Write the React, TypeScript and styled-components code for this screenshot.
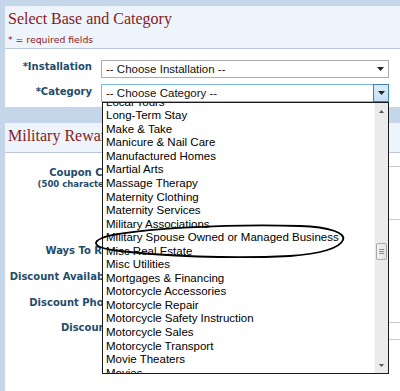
import styled, { createGlobalStyle } from "styled-components";

const GlobalStyle = createGlobalStyle`
  html, body {
    margin: 0;
    padding: 0;
  }
  body {
    background: #c5d6ea;
    width: 400px;
    height: 391px;
    overflow: hidden;
  }
`;

const Page = styled.div`
  position: relative;
  box-sizing: border-box;
  height: 391px;
  padding: 6px 0 0 5px;
  overflow: hidden;
`;

const Panel = styled.section<{ $fill?: boolean }>`
  width: 420px;
  background: #fff;
  & + & {
    margin-top: 16px;
  }
  ${p => p.$fill && "height: 300px;"}
`;

const PanelHeader = styled.div<{ $bottom: number }>`
  background: #eef4fc;
  border-bottom: 1px solid #b9c8dc;
  padding: 3px 0 ${p => p.$bottom}px 3px;
`;

const Title = styled.h2`
  margin: 0;
  font: normal 16px/20px "Liberation Serif", "DejaVu Serif", serif;
  color: #861a1a;
`;

const Required = styled.div`
  margin-top: 5px;
  font: 9.3px/12px "DejaVu Sans", Verdana, sans-serif;
  color: #861a1a;
`;

const PanelBody = styled.div<{ $label: number; $gap: number; $rowGap: number; $top: number }>`
  display: grid;
  grid-template-columns: ${p => p.$label}px 1fr;
  column-gap: ${p => p.$gap}px;
  row-gap: ${p => p.$rowGap}px;
  align-items: start;
  padding: ${p => p.$top}px 0 5px;
`;

const Label = styled.div<{ $pad?: number }>`
  text-align: right;
  white-space: nowrap;
  padding-top: ${p => p.$pad ?? 1}px;
  font: bold 10px/11px "DejaVu Sans", Verdana, sans-serif;
  color: #1f4d6b;
`;

const Hint = styled.span`
  display: block;
  margin-top: 1px;
  font-size: 8.5px;
  line-height: 10px;
`;

const SelectBox = styled.div<{ $focused?: boolean }>`
  position: relative;
  box-sizing: border-box;
  width: 288px;
  height: 18px;
  display: flex;
  align-items: center;
  background: #fff;
  border: 1px solid ${p => (p.$focused ? "#7eb4ea" : "#abadb3")};
  font: 11.5px/16px "Liberation Sans", Arial, sans-serif;
  color: #111;
`;

const SelectText = styled.span`
  flex: 1;
  padding-left: 4px;
  white-space: nowrap;
`;

const SelectButton = styled.span<{ $focused?: boolean }>`
  box-sizing: border-box;
  width: 15px;
  align-self: stretch;
  display: flex;
  align-items: center;
  justify-content: center;
  ${p =>
    p.$focused &&
    `
    background: linear-gradient(#dcedfa, #c3e0f6);
    border: 1px solid #3c7fb1;
    margin: -1px -1px -1px 0;
    width: 16px;
  `}
`;

const DropList = styled.div`
  position: absolute;
  top: calc(100% + 1px);
  left: 0;
  right: -1px;
  height: 272px;
  box-sizing: border-box;
  display: flex;
  background: #fff;
  border: 1px solid #1a1a1a;
  overflow: hidden;
  z-index: 2;
`;

const Options = styled.div`
  flex: 1;
  overflow: hidden;
`;

const OptionStack = styled.div<{ $scroll: number }>`
  margin-top: ${p => -p.$scroll}px;
`;

const Option = styled.div`
  padding-left: 3px;
  white-space: nowrap;
  font: 11.5px/13.55px "Liberation Sans", Arial, sans-serif;
  color: #000;
`;

const ScrollBar = styled.div`
  width: 13px;
  display: flex;
  flex-direction: column;
  align-items: center;
  background: #ebebeb;
  border-left: 1px solid #f6f6f6;
`;

const ArrowCell = styled.div`
  height: 16px;
  display: flex;
  align-items: center;
  justify-content: center;
`;

const Track = styled.div`
  flex: 1;
  width: 100%;
  display: flex;
  justify-content: center;
`;

const Thumb = styled.div<{ $offset: number }>`
  box-sizing: border-box;
  margin-top: ${p => p.$offset}px;
  width: 11px;
  height: 17px;
  border: 1px solid #a9a9a9;
  border-radius: 2px;
  background: linear-gradient(90deg, #f4f4f4, #e2e2e2);
  display: flex;
  flex-direction: column;
  align-items: center;
  justify-content: center;
  gap: 1px;
`;

const Grip = styled.span`
  width: 5px;
  height: 1px;
  background: #8c8c8c;
`;

const Field = styled.div<{ $w: number; $h?: number; $after?: number }>`
  box-sizing: border-box;
  width: ${p => p.$w}px;
  height: ${p => p.$h ?? 18}px;
  margin-bottom: ${p => p.$after ?? 0}px;
  background: #fff;
  border: 1px solid #c9c9c9;
`;

const Annotation = styled.svg`
  position: absolute;
  top: 0;
  left: 0;
  z-index: 3;
  pointer-events: none;
`;

const Caret = ({ up }: { up?: boolean }) => (
  <svg width="7" height="4" viewBox="0 0 7 4">
    <path d={up ? "M0 4 L3.5 0 L7 4 Z" : "M0 0 L7 0 L3.5 4 Z"} fill="#222" />
  </svg>
);

const SmallCaret = ({ up }: { up?: boolean }) => (
  <svg width="5" height="3" viewBox="0 0 5 3">
    <path d={up ? "M0 3 L2.5 0 L5 3 Z" : "M0 0 L5 0 L2.5 3 Z"} fill="#555" />
  </svg>
);

const categories = [
  "Local Tours",
  "Long-Term Stay",
  "Make & Take",
  "Manicure & Nail Care",
  "Manufactured Homes",
  "Martial Arts",
  "Massage Therapy",
  "Maternity Clothing",
  "Maternity Services",
  "Military Associations",
  "Military Spouse Owned or Managed Business",
  "Misc Real Estate",
  "Misc Utilities",
  "Mortgages & Financing",
  "Motorcycle Accessories",
  "Motorcycle Repair",
  "Motorcycle Safety Instruction",
  "Motorcycle Sales",
  "Motorcycle Transport",
  "Movie Theaters",
  "Movies",
  "Moving Services",
];

export default function App() {
  return (
    <>
      <GlobalStyle />
      <Page>
        <Panel>
          <PanelHeader $bottom={2}>
            <Title>Select Base and Category</Title>
            <Required>* = required fields</Required>
          </PanelHeader>
          <PanelBody $label={87} $gap={9} $rowGap={6} $top={11}>
            <Label>*Installation</Label>
            <SelectBox>
              <SelectText>-- Choose Installation --</SelectText>
              <SelectButton>
                <Caret />
              </SelectButton>
            </SelectBox>
            <Label $pad={2}>*Category</Label>
            <SelectBox $focused>
              <SelectText>-- Choose Category --</SelectText>
              <SelectButton $focused>
                <Caret />
              </SelectButton>
              <DropList>
                <Options>
                  <OptionStack $scroll={7.3}>
                    {categories.map(c => (
                      <Option key={c}>{c}</Option>
                    ))}
                  </OptionStack>
                </Options>
                <ScrollBar>
                  <ArrowCell>
                    <SmallCaret up />
                  </ArrowCell>
                  <Track>
                    <Thumb $offset={124}>
                      <Grip />
                      <Grip />
                      <Grip />
                    </Thumb>
                  </Track>
                  <ArrowCell>
                    <SmallCaret />
                  </ArrowCell>
                </ScrollBar>
              </DropList>
            </SelectBox>
          </PanelBody>
        </Panel>

        <Panel $fill>
          <PanelHeader $bottom={6}>
            <Title>Military Rewards Discount</Title>
          </PanelHeader>
          <PanelBody $label={135} $gap={10} $rowGap={8} $top={13}>
            <Label>
              Coupon Content
              <Hint>(500 characters max)</Hint>
            </Label>
            <Field $w={300} $h={54} $after={16} />
            <Label>Ways To Redeem</Label>
            <Field $w={200} />
            <Label>Discount Available For:</Label>
            <Field $w={200} />
            <Label>Discount Phone No.</Label>
            <Field $w={150} />
            <Label $pad={0}>Discount Type</Label>
            <Field $w={300} />
          </PanelBody>
        </Panel>

        <Annotation width="400" height="391" viewBox="0 0 400 391">
          <path
            d="M104 237 C140 228 230 224 300 226 C330 227 346 233 343 240 C340 248 320 254 290 256 C230 259 160 256 120 251 C100 249 93 245 97 241 C99 239 104 237 112 235"
            fill="none"
            stroke="#000"
            strokeWidth="1.8"
            strokeLinecap="round"
          />
        </Annotation>
      </Page>
    </>
  );
}
